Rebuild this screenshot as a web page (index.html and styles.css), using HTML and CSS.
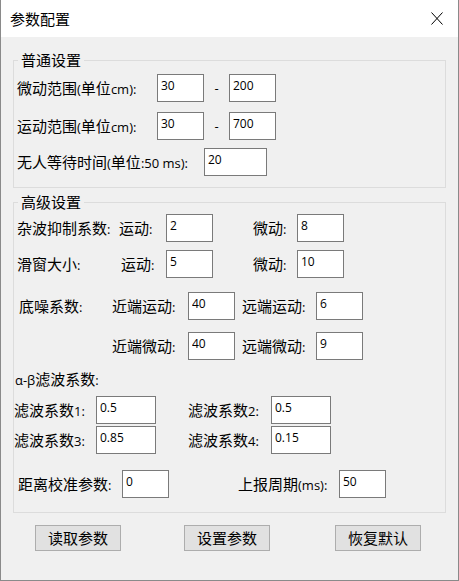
FILE: index.html
```html
<!DOCTYPE html>
<html lang="zh-CN">
<head>
<meta charset="utf-8">
<title>参数配置</title>
<link rel="stylesheet" href="styles.css">
</head>
<body>
<div class="window">
  <div class="titlebar">
    <span class="title">参数配置</span>
    <svg class="close" width="12" height="13" viewBox="0 0 12 13"><path d="M0.5 0.5 L11.5 12.5 M11.5 0.5 L0.5 12.5" stroke="#000" stroke-width="1" fill="none"/></svg>
  </div>
  <div class="content">
    <fieldset class="group g1">
      <legend>普通设置</legend>
      <div class="row gr1">
        <span class="lbl" style="width:140px">微动范围<span class="en">(</span>单位<span class="en">cm):</span></span>
        <input class="box" value="30">
        <span class="dash">-</span>
        <input class="box" value="200">
      </div>
      <div class="row gr2">
        <span class="lbl" style="width:140px">运动范围<span class="en">(</span>单位<span class="en">cm):</span></span>
        <input class="box" value="30">
        <span class="dash">-</span>
        <input class="box" value="700">
      </div>
      <div class="row gr3">
        <span class="lbl" style="width:187px">无人等待时间<span class="en">(</span>单位<span class="en">:50 ms):</span></span>
        <input class="box wide" value="20">
      </div>
    </fieldset>

    <fieldset class="group g2">
      <legend>高级设置</legend>
      <div class="row hr1">
        <span class="lbl" style="width:102px">杂波抑制系数<span class="en">:</span></span>
        <span class="lbl" style="width:47px">运动<span class="en">:</span></span>
        <input class="box" value="2">
        <span class="lbl mid" style="width:44px">微动<span class="en">:</span></span>
        <input class="box" value="8">
      </div>
      <div class="row hr2">
        <span class="lbl" style="width:104px">滑窗大小<span class="en">:</span></span>
        <span class="lbl" style="width:45px">运动<span class="en">:</span></span>
        <input class="box" value="5">
        <span class="lbl mid" style="width:44px">微动<span class="en">:</span></span>
        <input class="box" value="10">
      </div>
      <div class="row hr3">
        <span class="lbl noise" style="width:93px">底噪系数<span class="en">:</span></span>
        <span class="lbl" style="width:76px">近端运动<span class="en">:</span></span>
        <input class="box" value="40">
        <span class="lbl far" style="width:74px">远端运动<span class="en">:</span></span>
        <input class="box" value="6">
      </div>
      <div class="row hr4">
        <span class="lbl" style="width:95px"></span>
        <span class="lbl" style="width:76px">近端微动<span class="en">:</span></span>
        <input class="box" value="40">
        <span class="lbl far" style="width:74px">远端微动<span class="en">:</span></span>
        <input class="box" value="9">
      </div>
      <div class="subhead"><span class="en">α-β</span>滤波系数<span class="en">:</span></div>
      <div class="row hr5">
        <span class="lbl filt" style="width:82px">滤波系数<span class="en">1:</span></span>
        <input class="box flt" value="0.5">
        <span class="lbl filt2" style="width:83px">滤波系数<span class="en">2:</span></span>
        <input class="box flt" value="0.5">
      </div>
      <div class="row hr6">
        <span class="lbl filt" style="width:82px">滤波系数<span class="en">3:</span></span>
        <input class="box flt" value="0.85">
        <span class="lbl filt2" style="width:83px">滤波系数<span class="en">4:</span></span>
        <input class="box flt" value="0.15">
      </div>
      <div class="row hr7">
        <span class="lbl dist" style="width:104px">距离校准参数<span class="en">:</span></span>
        <input class="box" value="0">
        <span class="lbl period" style="width:101px">上报周期<span class="en">(ms):</span></span>
        <input class="box" value="50">
      </div>
    </fieldset>

    <div class="buttons">
      <button class="btn b1">读取参数</button>
      <button class="btn b2">设置参数</button>
      <button class="btn b3">恢复默认</button>
    </div>
  </div>
</div>
</body>
</html>
```

FILE: styles.css
```css
* { box-sizing: border-box; }
html, body { margin: 0; padding: 0; background: #ffffff; }
body {
  font-family: "Noto Sans CJK SC", "Liberation Sans", sans-serif;
  font-size: 15px;
  color: #000;
}
.window {
  width: 459px;
  height: 581px;
  border: 1px solid #8a8a8a;
  border-top: 0;
  background: #f0f0f0;
  display: flex;
  flex-direction: column;
}
.titlebar {
  height: 37px;
  flex: none;
  background: #fff;
  display: flex;
  align-items: center;
  padding-left: 9px;
  padding-right: 15px;
}
.title { line-height: 20px; }
.close { margin-left: auto; display: block; }
.content { padding: 13px 12px 0; }

.group {
  margin: 0;
  padding: 0 2px 11px 3px;
  border: 1px solid #dcdcdc;
  min-width: 0;
}
.g2 { margin-top: 4px; padding-bottom: 14px; }
legend {
  padding: 0 3px;
  margin-left: 1px;
  line-height: 20px;
}
.en {
  font-family: "Open Sans", "Liberation Sans", sans-serif;
  font-size: 13px;
}
.row {
  display: flex;
  align-items: center;
  height: 28px;
}
.lbl {
  display: block;
  flex: none;
  line-height: 20px;
  white-space: nowrap;
}
.box {
  display: block;
  flex: none;
  width: 47px;
  height: 28px;
  margin: 0;
  border: 1px solid #7a7a7a;
  border-radius: 0;
  background: #fff;
  padding: 2px 3px 8px;
  font-family: "Open Sans", "Liberation Sans", sans-serif;
  font-size: 12px;
  line-height: 16px;
  color: #000;
  outline: none;
}
.box.wide { width: 63px; }
.box.flt { width: 60px; }
.dash {
  width: 25px;
  text-align: center;
  font-family: "Open Sans", "Liberation Sans", sans-serif;
  font-size: 13px;
}
.gr1 { margin-top: 4px; }
.gr2 { margin-top: 10px; }
.gr3 { margin-top: 8px; }

.hr1 { margin-top: 2px; }
.hr2 { margin-top: 8px; }
.hr3 { margin-top: 14px; }
.hr4 { margin-top: 12px; }
.hr5 { margin-top: 7px; }
.hr6 { margin-top: 2px; }
.hr7 { margin-top: 16px; }
.mid { margin-left: 40px; }
.noise { margin-left: 2px; }
.far { margin-left: 7px; }
.filt { margin-left: -3px; }
.filt2 { margin-left: 32px; }
.dist { margin-left: 1px; }
.period { margin-left: 69px; }
.subhead {
  margin-top: 9px;
  margin-left: -2px;
  line-height: 20px;
  height: 20px;
}

.buttons {
  display: flex;
  margin-top: 12px;
}
.btn {
  width: 86px;
  height: 26px;
  margin: 0;
  padding: 0;
  border: 1px solid #adadad;
  border-radius: 0;
  background: #e1e1e1;
  font-family: "Noto Sans CJK SC", sans-serif;
  font-size: 15px;
  line-height: 20px;
  color: #000;
}
.b1 { margin-left: 22px; }
.b2 { margin-left: 63px; }
.b3 { margin-left: 65px; }
```
